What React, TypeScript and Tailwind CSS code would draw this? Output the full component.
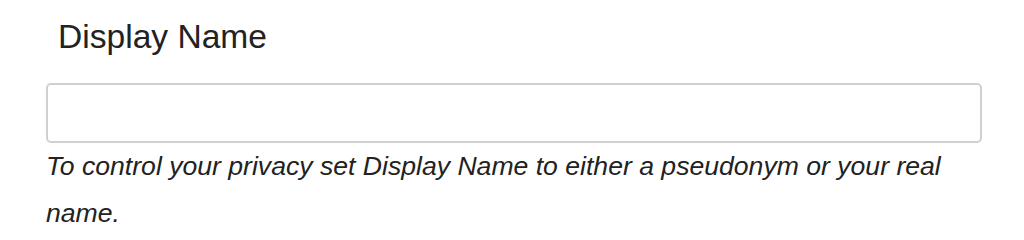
export default function App() {
  return (
    <div className="w-[1024px] h-[240px] bg-white overflow-hidden pl-[46px] pr-[42px] pt-[13px]" style={{ fontFamily: '"Liberation Sans", Arial, sans-serif' }}>
      <label className="block pl-[12px] text-[33.6px] leading-[48px] text-[#222]">Display Name</label>
      <input
        type="text"
        className="mt-[22px] block w-full h-[60px] rounded-[5px] border-2 border-[#d0d0d0] bg-white px-3 outline-none"
      />
      <p className="italic text-[26.6px] leading-[47px] text-[#222]">
        To control your privacy set Display Name to either a pseudonym or your real name.
      </p>
    </div>
  );
}
